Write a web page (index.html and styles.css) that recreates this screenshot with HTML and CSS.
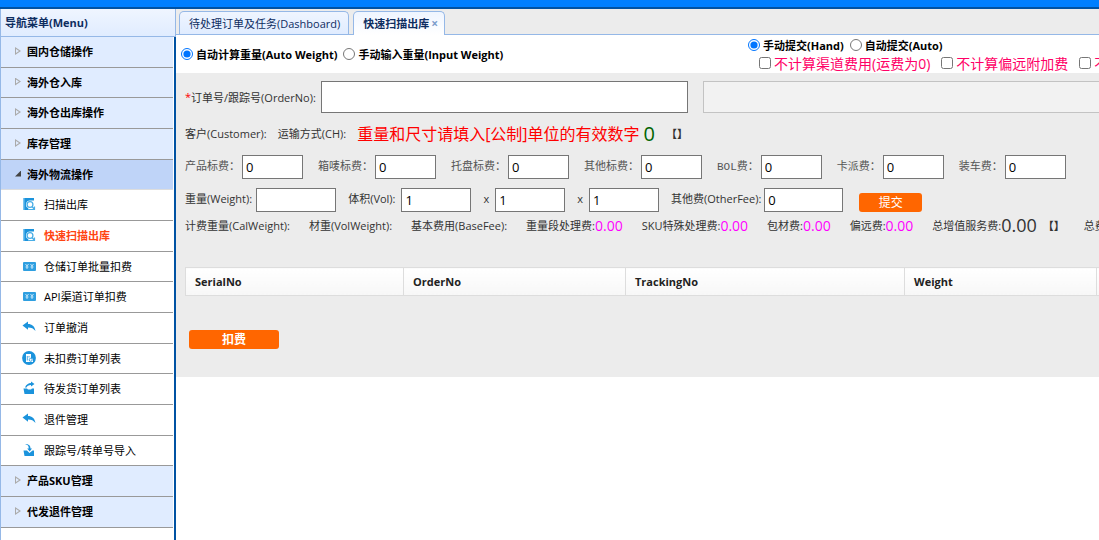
FILE: index.html
```html
<!DOCTYPE html>
<html lang="zh-CN">
<head>
<meta charset="utf-8">
<title>快速扫描出库</title>
<link rel="stylesheet" href="styles.css">
</head>
<body>
<svg class="defs" aria-hidden="true">
  <symbol id="scan" viewBox="0 0 14 14"><path fill="#1b93dc" d="M1 1h11v2.500H8a4 4 0 0 0-2 7.500l1 2H1z"/><path fill="#79c3ef" d="M1 1h1.500v12H1z"/><circle cx="8" cy="7.500" r="2.900" fill="none" stroke="#4aaee6" stroke-width="1.300"/><path d="M7 12.500h5.500V9.500M10 9.500l2.500 3" fill="none" stroke="#4aaee6" stroke-width="1.200"/></symbol>
  <symbol id="fee" viewBox="0 0 14 14"><rect x="1" y="3" width="13" height="9" rx="1" fill="#2f9fe0"/><path d="M3.500 5l1.500 2 1.500-2M5 7v3M3.500 8h3M8.500 5L10 7l1.500-2M10 7v3M8.500 8h3" fill="none" stroke="#d3ecfa" stroke-width=".9"/></symbol>
  <symbol id="back" viewBox="0 0 14 14"><path fill="#1b93dc" d="M.5 5.500L6 1.500V4c4 0 6.500 2 7.500 7-2-2.500-4-3.500-7.500-3.500v2.300z"/></symbol>
  <symbol id="list" viewBox="0 0 14 14"><circle cx="7" cy="7" r="6.900" fill="#1b93dc"/><path fill="#fff" d="M4 3h5v4l2 1v3H4z"/><path d="M5.300 5v4.500M7 5v1.500" stroke="#1b93dc" stroke-width=".8"/><circle cx="8.700" cy="8.800" r="1.500" fill="none" stroke="#1b93dc" stroke-width=".8"/></symbol>
  <symbol id="send" viewBox="0 0 14 14"><path fill="#1b93dc" d="M1.500 7.500H5l1 1h3l1-1h2V13H2.500zM3 6.500C4 3.500 6.500 2 9 2V.5L12.500 3 9 5.500V4C6.500 4 5 5 4.500 6.500z"/></symbol>
  <symbol id="import" viewBox="0 0 14 14"><path fill="#1b93dc" d="M1.500 7.500H5L7.500 10l3-2.500H12V13H2.500zM3 1c4 0 5.500 1.500 5.500 4.500H10L7.700 8.500 5.200 5.500h1.500C6.700 3 6 1.800 3 1z"/></symbol>
</svg>
<div class="topbar"></div>
<div class="layout">
  <aside class="sidebar">
    <h2 class="sidebar-title">导航菜单(Menu)</h2>
    <nav class="menu">
      <button class="group"><i class="arrow"></i>国内仓储操作</button>
      <button class="group"><i class="arrow"></i>海外仓入库</button>
      <button class="group"><i class="arrow"></i>海外仓出库操作</button>
      <button class="group"><i class="arrow"></i>库存管理</button>
      <button class="group open"><i class="arrow"></i>海外物流操作</button>
      <a class="item" href="#"><svg><use href="#scan"/></svg>扫描出库</a>
      <a class="item current" href="#"><svg><use href="#scan"/></svg>快速扫描出库</a>
      <a class="item" href="#"><svg><use href="#fee"/></svg>仓储订单批量扣费</a>
      <a class="item" href="#"><svg><use href="#fee"/></svg>API渠道订单扣费</a>
      <a class="item" href="#"><svg><use href="#back"/></svg>订单撤消</a>
      <a class="item" href="#"><svg><use href="#list"/></svg>未扣费订单列表</a>
      <a class="item" href="#"><svg><use href="#send"/></svg>待发货订单列表</a>
      <a class="item" href="#"><svg><use href="#back"/></svg>退件管理</a>
      <a class="item" href="#"><svg><use href="#import"/></svg>跟踪号/转单号导入</a>
      <button class="group"><i class="arrow"></i>产品SKU管理</button>
      <button class="group"><i class="arrow"></i>代发退件管理</button>
    </nav>
  </aside>
  <main class="main">
    <div class="tabs">
      <button class="tab">待处理订单及任务(Dashboard)</button>
      <button class="tab active">快速扫描出库<span class="close">×</span></button>
    </div>
    <div class="options">
      <div class="choices mode">
        <label><input type="radio" name="mode" checked>自动计算重量(Auto Weight)</label>
        <label><input type="radio" name="mode">手动输入重量(Input Weight)</label>
      </div>
      <div class="submit-options">
        <div class="choices">
          <label><input type="radio" name="submit" checked>手动提交(Hand)</label>
          <label><input type="radio" name="submit">自动提交(Auto)</label>
        </div>
        <div class="choices flags">
          <label><input type="checkbox">不计算渠道费用(运费为0)</label>
          <label><input type="checkbox">不计算偏远附加费</label>
          <label><input type="checkbox">不</label>
        </div>
      </div>
    </div>
    <form class="panel">
      <div class="row order-row">
        <label class="order-label" for="order"><span class="required">*</span>订单号/跟踪号(OrderNo):</label>
        <input class="order" id="order" type="text">
        <input class="order result" type="text" aria-label="结果" disabled>
      </div>
      <div class="row info-row">
        <span>客户(Customer):</span><span>运输方式(CH):</span>
        <span class="notice"><span class="warning">重量和尺寸请填入[公制]单位的有效数字</span><span class="count">0</span></span><b>【】</b>
      </div>
      <div class="row tag-row">
        <label>产品标费：<input type="text" value="0"></label>
        <label>箱唛标费：<input type="text" value="0"></label>
        <label>托盘标费：<input type="text" value="0"></label>
        <label>其他标费：<input type="text" value="0"></label>
        <label>BOL费：<input type="text" value="0"></label>
        <label>卡派费：<input type="text" value="0"></label>
        <label>装车费：<input type="text" value="0"></label>
      </div>
      <div class="row size-row">
        <label class="weight">重量(Weight):<input type="text"></label>
        <label class="volume">体积(Vol):<input type="text" value="1"></label>
        <span>x</span><input type="text" value="1" aria-label="宽">
        <span>x</span><input type="text" value="1" aria-label="高">
        <label class="other">其他费(OtherFee):<input type="text" value="0"></label>
        <button class="action submit" type="button">提交</button>
      </div>
      <div class="row sum-row">
        <span>计费重量(CalWeight):</span>
        <span>材重(VolWeight):</span>
        <span>基本费用(BaseFee):</span>
        <span>重量段处理费:<em>0.00</em></span>
        <span>SKU特殊处理费:<em>0.00</em></span>
        <span>包材费:<em>0.00</em></span>
        <span>偏远费:<em>0.00</em></span>
        <span>总增值服务费:<strong>0.00</strong><b>【】</b></span>
        <span>总费</span>
      </div>
      <table class="orders">
        <thead><tr><th class="serial">SerialNo</th><th class="number">OrderNo</th><th class="tracking">TrackingNo</th><th class="mass">Weight</th><th></th></tr></thead>
      </table>
      <button class="action charge" type="button">扣费</button>
    </form>
  </main>
</div>
</body>
</html>
```
FILE: styles.css
```css
* { box-sizing: border-box; }
body, button, input {
  font-family: "Open Sans", "Noto Sans CJK SC", sans-serif;
  font-size: 11px;
}
body {
  margin: 0;
  min-height: 100vh;
  display: flex;
  flex-direction: column;
  overflow: hidden;
  color: #333;
  background: #fff;
}
button { border: 0; padding: 0; cursor: pointer; }
input { margin: 0; }
.defs { display: none; }
.topbar { height: 9px; background: #007fff; border-bottom: 2px solid #0052a3; }
.layout { flex: 1; display: flex; }

.sidebar { width: 176px; flex: none; display: flex; flex-direction: column; border-left: 1px solid #95b8e7; }
.sidebar-title {
  margin: 0;
  height: 28px;
  padding-left: 4px;
  font-size: 11px;
  line-height: 28px;
  color: #0e2d5f;
  background: linear-gradient(#eff5ff, #e0ecff);
  border-right: 1px solid #95b8e7;
  border-bottom: 1px solid #95b8e7;
}
.menu {
  flex: 1;
  display: grid;
  grid-auto-rows: 31px 30px 31px;
  align-content: start;
  padding-right: 1px;
  border-right: 2px solid #0052a3;
}
.group, .item {
  display: flex;
  align-items: center;
  border-bottom: 1px solid #999;
  color: #000;
  text-align: left;
  text-decoration: none;
}
.group { gap: 6px; padding: 0 0 2px 14px; font-weight: bold; background: #e0ecff; }
.open { background: #bfd4f8; border-bottom-color: #ddd; }
.arrow { width: 6px; height: 8px; background: #aaa; clip-path: polygon(0 0, 6px 4px, 0 8px, 0 0, 1px 2px, 1px 6px, 4px 4px, 1px 2px); }
.open .arrow { height: 6px; background: #444; clip-path: polygon(100% 0, 100% 100%, 0 100%); }
.item { gap: 8px; padding: 0 0 2px 21px; }
.item svg { width: 14px; height: 14px; }
.current { color: #ff4411; font-weight: bold; }

.main { flex: 1; min-width: 0; overflow: hidden; white-space: nowrap; }
.tabs {
  display: flex;
  align-items: flex-end;
  gap: 4px;
  height: 26px;
  padding-left: 3px;
  background: #ececec;
  border-bottom: 1px solid #95b8e7;
}
.tab {
  height: 23px;
  padding: 0 8px 0 9px;
  color: #0e2d5f;
  background: linear-gradient(#eff5ff, #e0ecff);
  border: 1px solid #95b8e7;
  border-bottom: 0;
  border-radius: 5px 5px 0 0;
}
.active { padding-right: 6px; margin-bottom: -1px; height: 24px; font-weight: bold; background: linear-gradient(#eff5ff, #fff); }
.close { margin-left: 2px; font-size: 12px; color: #7d9dcb; }

.options { display: flex; height: 38px; color: #000; }
.choices { display: flex; gap: 6px; }
.choices label { display: flex; align-items: center; gap: 3px; font-weight: bold; }
.choices input { width: 12px; height: 12px; }
.mode { width: 572px; flex: none; padding-left: 5px; }
.submit-options { padding-top: 1px; }
.submit-options .choices { height: 18px; }
.submit-options .flags { gap: 11px; padding-left: 11px; }
.flags label { font-size: 14px; font-weight: normal; color: #ff0066; }

.panel { padding: 8px 0 28px 9px; background: #ececec; }
.row { display: flex; }
.row label { display: flex; }
.row input { padding: 1px 3px; border: 1px solid #767676; font-size: 13px; background: #fff; }
.order-row { height: 32px; align-items: center; }
.order-label { width: 136px; flex: none; }
.required { color: #f00; }
.row .order { width: 367px; height: 32px; flex: none; }
.row .result { width: 560px; margin-left: 15px; background: #f2f2f2; border-color: #c3c3c3; }
.info-row { height: 42px; align-items: center; gap: 11px; padding-bottom: 2px; }
.notice { display: flex; align-items: center; gap: 4px; }
.warning { font-size: 16px; color: #f00; }
.count { font-size: 20px; color: #006400; }
.tag-row { gap: 15px; color: #555; }
.tag-row label { gap: 2px; line-height: 24px; font-family: "Liberation Mono", "Noto Sans CJK SC", monospace; }
.tag-row input { width: 61px; height: 24px; }
.size-row { margin-top: 9px; gap: 12px; line-height: 22px; }
.size-row input { width: 70px; height: 24px; }
.size-row span + input { margin-left: -6px; }
.size-row .weight { gap: 4px; }
.size-row .weight input { width: 80px; }
.size-row .volume { gap: 6px; }
.size-row .other { gap: 3px; }
.size-row .other input { width: 79px; }
.action { color: #fff; background: #ff6600; border-radius: 3px; font-size: 12px; line-height: 19px; height: 19px; }
.submit { width: 63px; margin: 5px 0 0 4px; }
.sum-row { height: 28px; align-items: center; gap: 19px; padding-bottom: 2px; }
.sum-row span { display: flex; align-items: center; }
.sum-row em { font-size: 14px; font-style: normal; color: #f0f; }
.sum-row strong { font-size: 18px; font-weight: normal; }
.sum-row b { margin-left: 6px; }
.orders { width: 1160px; margin-top: 27px; table-layout: fixed; border-collapse: collapse; }
.orders th { height: 28px; padding: 0 9px; text-align: left; color: #222; border: 1px solid #ddd; background: linear-gradient(#fff, #f7f7f7); }
.serial { width: 218px; }
.number { width: 222px; }
.tracking { width: 279px; }
.mass { width: 192px; }
.charge { display: block; width: 90px; margin: 34px 0 0 4px; font-weight: bold; }
```
